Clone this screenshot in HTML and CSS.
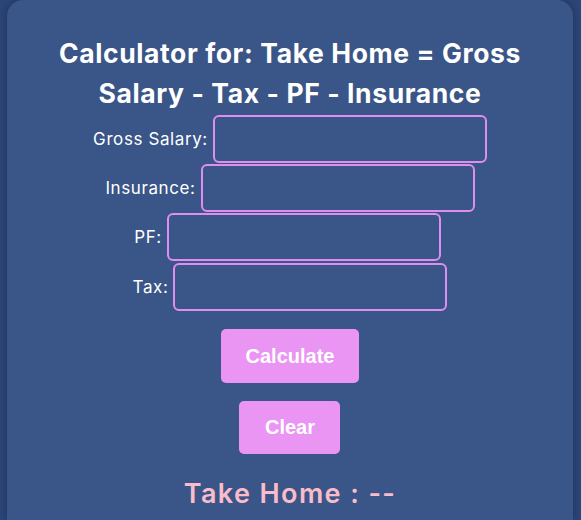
FILE: index.html
```html
<!DOCTYPE html>
<html lang="en">
<head>
<meta charset="utf-8">
<title>Take Home Calculator</title>
<link rel="stylesheet" href="styles.css">
</head>
<body>
<div class="card">
  <h1 class="title">Calculator for: Take Home = Gross Salary - Tax - PF - Insurance</h1>
  <form class="form">
    <div class="row"><label class="label">Gross Salary:</label><input class="field" type="text"></div>
    <div class="row"><label class="label">Insurance:</label><input class="field" type="text"></div>
    <div class="row"><label class="label">PF:</label><input class="field" type="text"></div>
    <div class="row"><label class="label">Tax:</label><input class="field" type="text"></div>
    <button class="btn btn-calc" type="button">Calculate</button>
    <button class="btn btn-clear" type="button">Clear</button>
  </form>
  <h2 class="result">Take Home : --</h2>
</div>
</body>
</html>
```

FILE: styles.css
```css
html, body {
  margin: 0;
  padding: 0;
}
body {
  background: #2c4779;
  padding: 0 8px 0 7px;
  height: 520px;
  overflow: hidden;
  font-family: Inter, "Noto Sans", sans-serif;
}
.card {
  background: #3a5587;
  border-radius: 16px 16px 0 0;
  box-shadow: 0 0 10px rgba(10, 20, 50, 0.45);
  height: 520px;
  overflow: hidden;
  display: flex;
  flex-direction: column;
  align-items: center;
  padding-top: 33px;
  box-sizing: border-box;
}
.title {
  margin: 0;
  width: 500px;
  text-align: center;
  color: #ffffff;
  font-size: 26.5px;
  line-height: 40px;
  font-weight: 700;
  letter-spacing: 0.6px;
}
.form {
  display: flex;
  flex-direction: column;
  align-items: center;
  margin-top: 1px;
}
.row {
  display: flex;
  align-items: center;
  gap: 5px;
  height: 49.3px;
}
.row:nth-child(3) {
  margin-left: -5px;
}
.label {
  color: #ffffff;
  font-size: 17px;
  font-weight: 400;
  letter-spacing: 0.6px;
}
.field {
  width: 274px;
  height: 48px;
  box-sizing: border-box;
  background: transparent;
  border: 2px solid #e08df0;
  border-radius: 6px;
  outline: none;
}
.btn {
  border: none;
  border-radius: 5px;
  background: #ea94f4;
  color: #ffffff;
  font-family: "Liberation Sans", Arial, sans-serif;
  font-weight: 700;
  font-size: 20px;
  height: 54px;
  padding: 0;
}
.btn-calc {
  margin-top: 18px;
  width: 138px;
}
.btn-clear {
  margin-top: 18px;
  width: 101px;
  height: 53px;
}
.result {
  margin: 20px 0 0;
  color: #f9bcca;
  font-size: 27px;
  font-weight: 600;
  line-height: 40px;
  letter-spacing: 1.4px;
}
```
